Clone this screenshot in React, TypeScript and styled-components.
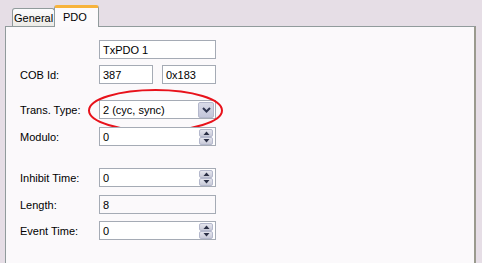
import React from "react";
import styled, { createGlobalStyle } from "styled-components";

const Global = createGlobalStyle`
  html, body { margin: 0; padding: 0; background: #ffffff; }
  body { font-family: "Liberation Sans", Arial, sans-serif; }
`;

const Frame = styled.div`
  width: 482px;
  height: 263px;
  background: #e6dee6;
  overflow: hidden;
  padding-top: 5px;
  box-sizing: border-box;
`;

const TabRow = styled.div`
  display: flex;
  align-items: flex-end;
  height: 21px;
  padding-left: 12px;
`;

const Tab = styled.div<{ $active?: boolean }>`
  box-sizing: border-box;
  font-size: 11px;
  color: #000;
  position: relative;
  ${(p) =>
    p.$active
      ? `
    width: 45px;
    height: 22px;
    margin-bottom: -1px;
    margin-left: -1px;
    z-index: 2;
    background: #fcfafc;
    border: 1px solid #919b9c;
    border-bottom: none;
    border-top: 3px solid #f7b33c;
    border-radius: 3px 3px 0 0;
    padding: 3px 0 0 8px;
  `
      : `
    width: 43px;
    height: 18px;
    background: linear-gradient(#fcfcfe, #ecebe6);
    border: 1px solid #919b9c;
    border-bottom: none;
    border-radius: 3px 3px 0 0;
    padding: 3px 0 0 1px;
  `}
`;

const Panel = styled.div`
  margin-left: 5px;
  width: 471px;
  height: 250px;
  box-sizing: border-box;
  background: #fbf9fb;
  border: 1px solid #919b9c;
  border-right: 2px solid #9a9a8e;
  border-bottom: none;
  padding: 13px 0 0 14px;
  display: flex;
  flex-direction: column;
  position: relative;
  z-index: 1;
`;

const Row = styled.div<{ $gap: number }>`
  display: flex;
  align-items: center;
  height: 19px;
  margin-top: ${(p) => p.$gap}px;
  gap: 9px;
`;

const Label = styled.div`
  width: 70px;
  font-size: 11px;
  color: #000;
`;

const Field = styled.div<{ $w?: number; $disabled?: boolean }>`
  box-sizing: border-box;
  width: ${(p) => p.$w ?? 117}px;
  height: 19px;
  border: 1px solid #a5abb5;
  background: ${(p) => (p.$disabled ? "#fbf9fb" : "#ffffff")};
  font-size: 11px;
  color: #000;
  display: flex;
  align-items: center;
  padding-left: 3px;
  position: relative;
`;

const FieldText = styled.span`
  flex: 1;
`;

const ComboButton = styled.div`
  box-sizing: border-box;
  width: 16px;
  height: 16px;
  margin-right: 1px;
  background: linear-gradient(#d9dbe8, #c3c6da);
  border: 1px solid #b4b8cc;
  border-radius: 2px;
  display: flex;
  align-items: center;
  justify-content: center;
`;

const Spin = styled.div`
  width: 14px;
  height: 16px;
  margin-right: 2px;
  display: flex;
  flex-direction: column;
`;

const SpinHalf = styled.div`
  box-sizing: border-box;
  flex: 1;
  background: linear-gradient(#e4e5ee, #c8cad8);
  border: 1px solid #b4b8cc;
  border-radius: 2px;
  display: flex;
  align-items: center;
  justify-content: center;
`;

const Ellipse = styled.svg`
  position: absolute;
  left: -12px;
  top: -12px;
  overflow: visible;
  pointer-events: none;
`;

const Chevron = () => (
  <svg width="9" height="6" viewBox="0 0 9 6">
    <path d="M1 1 L4.5 4.5 L8 1" fill="none" stroke="#2f3650" strokeWidth="2" />
  </svg>
);

const Arrow = ({ up }: { up?: boolean }) => (
  <svg width="7" height="4" viewBox="0 0 7 4">
    <path d={up ? "M0.5 4 L3.5 0.5 L6.5 4 Z" : "M0.5 0 L3.5 3.5 L6.5 0 Z"} fill="#2a2f45" />
  </svg>
);

const Spinner = () => (
  <Spin>
    <SpinHalf>
      <Arrow up />
    </SpinHalf>
    <SpinHalf>
      <Arrow />
    </SpinHalf>
  </Spin>
);

export default function App() {
  return (
    <>
      <Global />
      <Frame>
        <TabRow>
          <Tab>General</Tab>
          <Tab $active>PDO</Tab>
        </TabRow>
        <Panel>
          <Row $gap={0}>
            <Label />
            <Field>
              <FieldText>TxPDO 1</FieldText>
            </Field>
          </Row>
          <Row $gap={6}>
            <Label>COB Id:</Label>
            <Field $w={54}>
              <FieldText>387</FieldText>
            </Field>
            <Field $w={54}>
              <FieldText>0x183</FieldText>
            </Field>
          </Row>
          <Row $gap={16}>
            <Label>Trans. Type:</Label>
            <Field>
              <FieldText>2 (cyc, sync)</FieldText>
              <ComboButton>
                <Chevron />
              </ComboButton>
              <Ellipse width="136" height="43">
                <ellipse cx="67.5" cy="21.5" rx="66.5" ry="20.5" fill="none" stroke="#e8121b" strokeWidth="2" />
              </Ellipse>
            </Field>
          </Row>
          <Row $gap={8}>
            <Label>Modulo:</Label>
            <Field>
              <FieldText>0</FieldText>
              <Spinner />
            </Field>
          </Row>
          <Row $gap={22}>
            <Label>Inhibit Time:</Label>
            <Field>
              <FieldText>0</FieldText>
              <Spinner />
            </Field>
          </Row>
          <Row $gap={8}>
            <Label>Length:</Label>
            <Field $disabled>
              <FieldText>8</FieldText>
            </Field>
          </Row>
          <Row $gap={7}>
            <Label>Event Time:</Label>
            <Field>
              <FieldText>0</FieldText>
              <Spinner />
            </Field>
          </Row>
        </Panel>
      </Frame>
    </>
  );
}
